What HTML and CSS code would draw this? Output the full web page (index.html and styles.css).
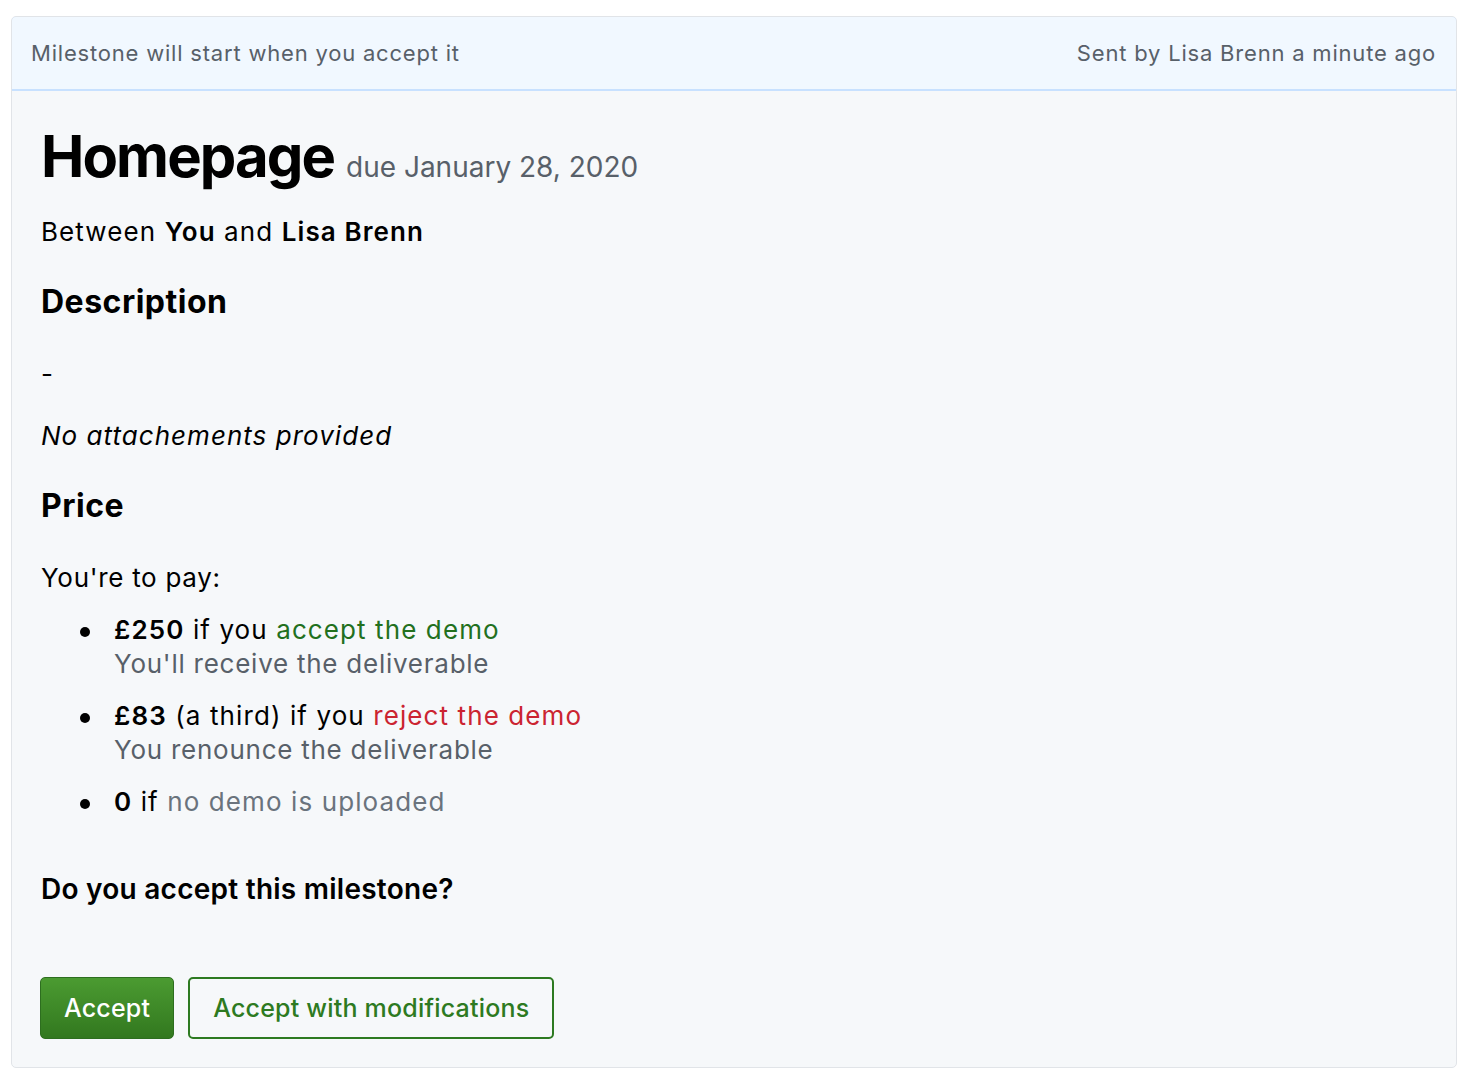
FILE: index.html
```html
<!DOCTYPE html>
<html lang="en">
<head>
<meta charset="utf-8">
<title>Milestone</title>
<link rel="stylesheet" href="styles.css">
</head>
<body>
<div class="box">
  <div class="box-header">
    <span>Milestone will start when you accept it</span>
    <span>Sent by Lisa Brenn a minute ago</span>
  </div>
  <div class="box-body">
    <h1 class="title">Homepage <span class="due">due January 28, 2020</span></h1>
    <p class="between">Between <strong>You</strong> and <strong>Lisa Brenn</strong></p>
    <h2 class="section">Description</h2>
    <p class="desc">-</p>
    <p class="attach">No attachements provided</p>
    <h2 class="section">Price</h2>
    <p class="pay">You're to pay:</p>
    <ul class="terms">
      <li><strong>£250</strong> if you <span class="green">accept the demo</span><br><span class="muted">You'll receive the deliverable</span></li>
      <li><strong>£83</strong> (a third) if you <span class="red">reject the demo</span><br><span class="muted">You renounce the deliverable</span></li>
      <li><strong>0</strong> if <span class="grey">no demo is uploaded</span></li>
    </ul>
    <p class="question">Do you accept this milestone?</p>
    <div class="actions">
      <button class="btn btn-primary">Accept</button>
      <button class="btn btn-outline">Accept with modifications</button>
    </div>
  </div>
</div>
</body>
</html>
```
FILE: styles.css
```css
html, body {
  margin: 0;
  padding: 0;
  background: #ffffff;
}
body {
  padding: 16px 13px 13px 11px;
  font-family: Inter, "Noto Sans", "Liberation Sans", sans-serif;
  color: #000;
}
.box {
  border: 1px solid #e1e4e8;
  border-radius: 5px;
  background: #f6f8fa;
  overflow: hidden;
}
.box-header {
  display: flex;
  justify-content: space-between;
  align-items: center;
  height: 75px;
  padding: 0 20px 0 19px;
  margin: -1px -1px 0 -1px;
  background: #f1f8ff;
  border: 1px solid #c8e1ff;
  border-bottom-width: 2px;
  border-radius: 5px 5px 0 0;
  box-sizing: border-box;
  font-size: 22px;
  letter-spacing: 0.8px;
  color: #586069;
}
.box-body {
  padding: 30px 29px 28px 29px;
}
.title {
  margin: 0;
  font-size: 58px;
  font-weight: 700;
  line-height: 70px;
  letter-spacing: -1.9px;
}
.due {
  font-size: 28px;
  font-weight: 400;
  color: #586069;
  letter-spacing: 0;
}
.between {
  margin: 12px 0 0;
  font-size: 26px;
  line-height: 36px;
  letter-spacing: 1.1px;
}
.between strong { font-weight: 600; }
.section {
  margin: 34px 0 0;
  font-size: 32px;
  line-height: 36px;
  font-weight: 700;
  letter-spacing: 0.5px;
}
.desc {
  margin: 36px 0 0;
  font-size: 26px;
  line-height: 36px;
}
.attach {
  margin: 26px 0 0;
  font-size: 26px;
  line-height: 36px;
  font-style: italic;
  letter-spacing: 1.03px;
}
.pay {
  margin: 36px 0 0;
  font-size: 26px;
  line-height: 36px;
  letter-spacing: 0.7px;
}
.terms {
  list-style: none;
  margin: 17px 0 0;
  padding-left: 73px;
  font-size: 26px;
  line-height: 34px;
  letter-spacing: 1.1px;
}
.terms li { margin-bottom: 18px; }
.terms li:last-child { margin-bottom: 0; }
.terms li::before {
  content: "";
  display: inline-block;
  width: 10px;
  height: 10px;
  border-radius: 50%;
  background: #000;
  margin-left: -34px;
  margin-right: 24px;
  vertical-align: 2px;
}
.terms strong { font-weight: 600; }
.green { color: #22701e; }
.red { color: #cb2431; }
.muted { color: #586069; letter-spacing: 0.75px; }
.grey { color: #6a737d; }
.question {
  margin: 52px 0 0;
  font-size: 28px;
  line-height: 36px;
  font-weight: 600;
  letter-spacing: 0.25px;
}
.actions {
  display: flex;
  gap: 14px;
  margin-top: 70px;
  margin-left: -1px;
}
.btn {
  font-family: inherit;
  font-size: 25px;
  font-weight: 500;
  letter-spacing: 0.2px;
  height: 62px;
  padding: 0 23px;
  border-radius: 5px;
  cursor: pointer;
}
.btn-primary {
  color: #fff;
  background: linear-gradient(#4b9b31, #32781f);
  border: 1px solid #2d6e1f;
}
.btn-outline {
  color: #2d7a21;
  background: #f6f8fa;
  border: 2px solid #2d7a21;
}
```
